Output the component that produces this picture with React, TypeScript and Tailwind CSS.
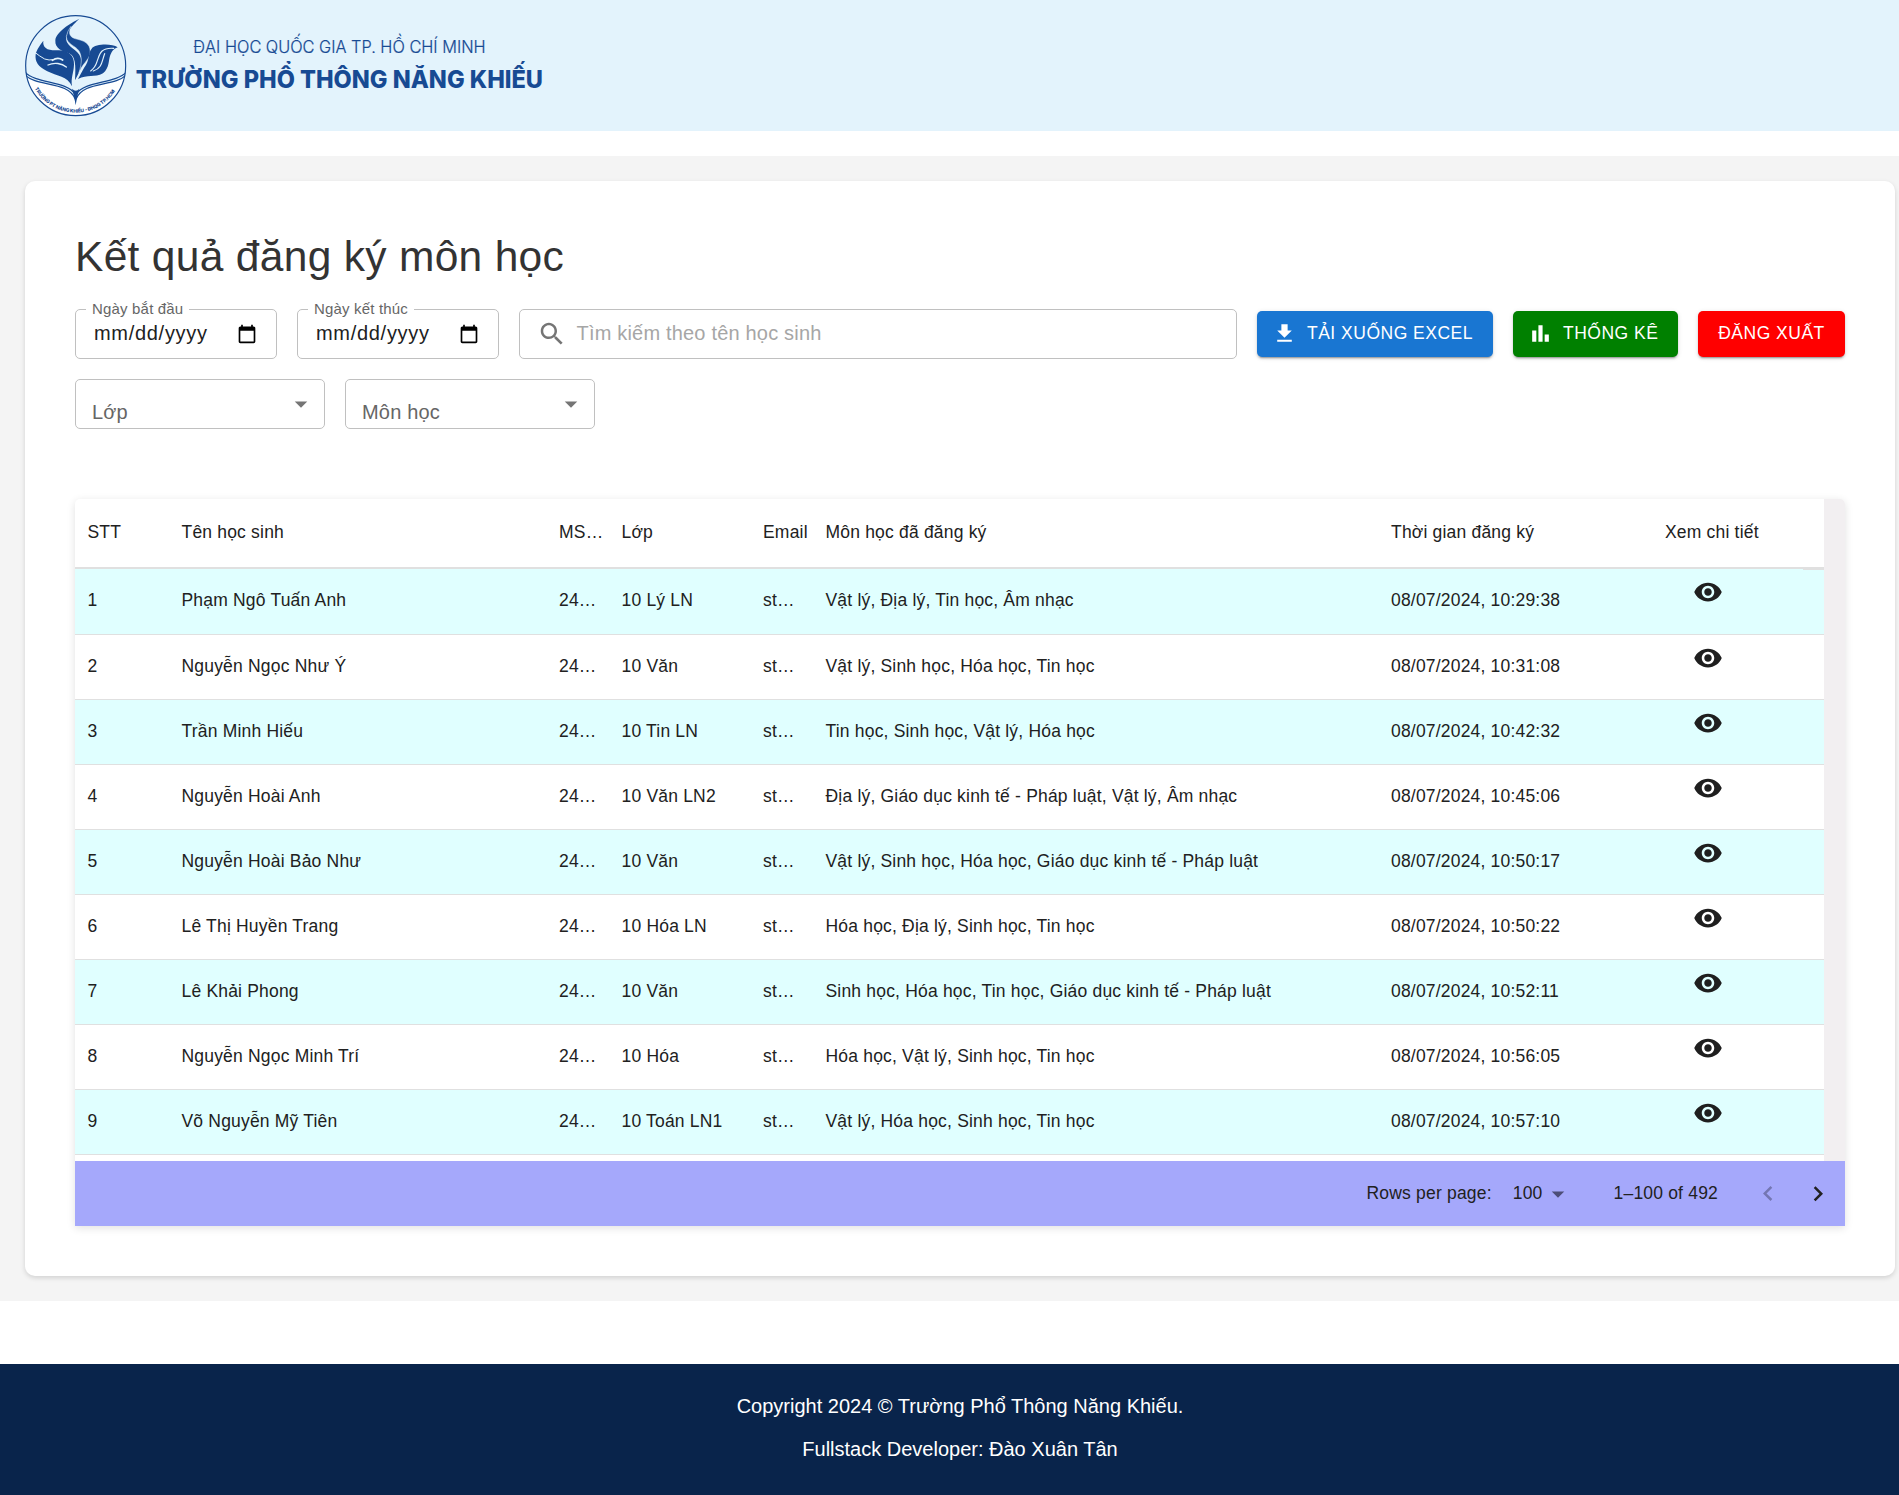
import React from "react";

type Student = { name: string; grade: string; subjects: string; time: string };

const students: Student[] = [
  { name: "Phạm Ngô Tuấn Anh", grade: "10 Lý LN", subjects: "Vật lý, Địa lý, Tin học, Âm nhạc", time: "10:29:38" },
  { name: "Nguyễn Ngọc Như Ý", grade: "10 Văn", subjects: "Vật lý, Sinh học, Hóa học, Tin học", time: "10:31:08" },
  { name: "Trần Minh Hiếu", grade: "10 Tin LN", subjects: "Tin học, Sinh học, Vật lý, Hóa học", time: "10:42:32" },
  { name: "Nguyễn Hoài Anh", grade: "10 Văn LN2", subjects: "Địa lý, Giáo dục kinh tế - Pháp luật, Vật lý, Âm nhạc", time: "10:45:06" },
  { name: "Nguyễn Hoài Bảo Như", grade: "10 Văn", subjects: "Vật lý, Sinh học, Hóa học, Giáo dục kinh tế - Pháp luật", time: "10:50:17" },
  { name: "Lê Thị Huyền Trang", grade: "10 Hóa LN", subjects: "Hóa học, Địa lý, Sinh học, Tin học", time: "10:50:22" },
  { name: "Lê Khải Phong", grade: "10 Văn", subjects: "Sinh học, Hóa học, Tin học, Giáo dục kinh tế - Pháp luật", time: "10:52:11" },
  { name: "Nguyễn Ngọc Minh Trí", grade: "10 Hóa", subjects: "Hóa học, Vật lý, Sinh học, Tin học", time: "10:56:05" },
  { name: "Võ Nguyễn Mỹ Tiên", grade: "10 Toán LN1", subjects: "Vật lý, Hóa học, Sinh học, Tin học", time: "10:57:10" },
];

const columns = "grid grid-cols-[94px_377.5px_62.5px_141.5px_62.5px_565.5px_274px_1fr]";

function Icon({ d, className }: { d: string; className?: string }) {
  return (
    <svg viewBox="0 0 24 24" fill="currentColor" className={className}>
      <path d={d} />
    </svg>
  );
}

const icons = {
  search:
    "M15.5 14h-.79l-.28-.27C15.41 12.59 16 11.11 16 9.5 16 5.91 13.09 3 9.5 3S3 5.91 3 9.5 5.91 16 9.5 16c1.61 0 3.09-.59 4.23-1.57l.27.28v.79l5 4.99L20.49 19l-4.99-5zm-6 0C7.01 14 5 11.99 5 9.5S7.01 5 9.5 5 14 7.01 14 9.5 11.99 14 9.5 14z",
  download: "M19 9h-4V3H9v6H5l7 7 7-7zM5 18v2h14v-2H5z",
  chart: "M4 9h4v11H4zm12 4h4v7h-4zm-6-9h4v16h-4z",
  arrow: "M7 10l5 5 5-5z",
  eye: "M12 4.5C7 4.5 2.73 7.61 1 12c1.73 4.39 6 7.5 11 7.5s9.27-3.11 11-7.5c-1.73-4.39-6-7.5-11-7.5zM12 17c-2.76 0-5-2.24-5-5s2.24-5 5-5 5 2.24 5 5-2.24 5-5 5zm0-8c-1.66 0-3 1.34-3 3s1.34 3 3 3 3-1.34 3-3-1.34-3-3-3z",
  calendar:
    "M20 3h-1V1h-2v2H7V1H5v2H4c-1.1 0-2 .9-2 2v16c0 1.1.9 2 2 2h16c1.1 0 2-.9 2-2V5c0-1.1-.9-2-2-2zm0 18H4V8h16v13z",
  left: "M15.41 16.09l-4.58-4.59 4.58-4.59L14 5.5l-6 6 6 6z",
  right: "M8.59 16.34l4.58-4.59-4.58-4.59L10 5.75l6 6-6 6z",
};

function Logo() {
  return (
    <svg viewBox="0 0 1680 393" className="block h-[131px] w-[560px]">
      <g transform="translate(60 30)" fill="#174a93">
        <clipPath id="disc">
          <circle cx="167" cy="167" r="151" />
        </clipPath>
        <g clipPath="url(#disc)">
          <path d="M10 193 C45 232 150 205 167 280 C184 205 290 232 325 193 L340 340 L0 340Z" fill="#fff" />
          <g fill="none" stroke="#174a93" strokeWidth="3.5">
            <path d="M14 186 C48 222 140 212 165 252" />
            <path d="M14 194 C50 232 145 212 166 268" />
            <path d="M320 186 C286 222 194 212 169 252" />
            <path d="M320 194 C284 232 189 212 168 268" />
          </g>
          <path d="M156 236 Q168 248 178 236 Q170 262 167 286 Q164 262 156 236Z" />
        </g>
        <circle cx="167" cy="167" r="150" fill="none" stroke="#174a93" strokeWidth="3.5" />
        <path d="M70 92 C67 113 82 122 111 121 C148 119 163 139 162 164 C161 190 152 202 156 229 C143 199 110 198 82 184 C55 171 44 156 47 133 Q49 119 70 92Z" />
        <path d="M178 26 C150 40 108 66 106 91 C104 116 128 125 147 130 C166 137 168 164 165 211 C176 190 186 174 184 151 C181 123 151 116 142 98 C129 75 158 45 178 26Z" />
        <path
          d="M153 49 C144 73 149 83 173 88 C202 94 213 109 210 131 C207 150 186 162 177 188 C186 158 186 139 177 123 C166 106 141 104 139 80 Q142 62 153 49Z"
          stroke="#e3f3fc"
          strokeWidth="1.5"
        />
        <path d="M293 112 C276 100 226 101 215 116 C203 130 211 149 192 174 Q182 192 174 207 C202 193 224 204 249 190 C269 174 265 149 271 135 Q276 119 293 112Z" />
        <g fill="none" stroke="#e3f3fc" strokeLinecap="round">
          <path d="M47 129 Q58 138 74 147 Q88 152 98 149" strokeWidth="3" />
          <path d="M97 151 C107 144 118 143 128 150" strokeWidth="5" />
          <path d="M84 165 C103 156 126 160 139 171" strokeWidth="4" />
          <path d="M281 115 C240 112 239 134 231 155 Q226 172 212 183" strokeWidth="3.5" />
          <path d="M254 131 C245 154 247 175 220 183" strokeWidth="3.5" />
        </g>
        <path id="ring" d="M43 233 A140 140 0 0 0 291 233" fill="none" />
        <text fontFamily="Inter, sans-serif" fontSize="14.5" fontWeight="800">
          <textPath href="#ring" startOffset="3" textLength="290">
            TRƯỜNG PT NĂNG KHIẾU - ĐHQG TP.HCM
          </textPath>
        </text>
      </g>
      <g fill="#174a93" fontFamily="Inter, sans-serif">
        <text x="580" y="158" fontSize="50" fontWeight="300" textLength="877" lengthAdjust="spacingAndGlyphs" stroke="#174a93" strokeWidth="0.6">
          ĐẠI HỌC QUỐC GIA TP. HỒ CHÍ MINH
        </text>
        <text x="407" y="264" fontSize="72" fontWeight="800" textLength="1222" lengthAdjust="spacingAndGlyphs">
          TRƯỜNG PHỔ THÔNG NĂNG KHIẾU
        </text>
      </g>
    </svg>
  );
}

function DateField({ label }: { label: string }) {
  return (
    <div className="relative flex h-[50px] w-[202px] items-center justify-between rounded-[5px] border border-[#c0c0c0] pr-[19px] pl-[18px]">
      <span className="absolute -top-[11px] left-[10px] bg-white px-[6px] text-[15px] leading-[20px] tracking-[0.18px] whitespace-nowrap text-[#666]">
        {label}
      </span>
      <span className="-mt-[2px] text-[20px] leading-[28px] tracking-[0.7px] text-[#212121]">mm/dd/yyyy</span>
      <Icon d={icons.calendar} className="-mt-[1px] h-[20px] w-[20px] text-black" />
    </div>
  );
}

function SelectField({ label }: { label: string }) {
  return (
    <div className="flex h-[50px] w-[250px] justify-between rounded-[5px] border border-[#c0c0c0] pr-[8px] pl-[16px] text-[#666]">
      <span className="pt-[18px] text-[20px] leading-[28px] tracking-[0.19px]">{label}</span>
      <Icon d={icons.arrow} className="mt-[9px] h-[30px] w-[30px] text-[#757575]" />
    </div>
  );
}

const buttonBase =
  "flex h-[46px] items-center rounded-[5px] pb-[2px] text-[17.5px] tracking-[0.5px] whitespace-nowrap text-white shadow-[0_3px_1px_-2px_rgba(0,0,0,0.2),0_2px_2px_0_rgba(0,0,0,0.14),0_1px_5px_0_rgba(0,0,0,0.12)]";

export default function App() {
  return (
    <div className="h-[1495px] w-full overflow-hidden bg-white font-['Liberation_Sans',Arial,sans-serif] text-[#212121]">
      <header className="h-[131px] bg-[#e3f3fc]">
        <Logo />
      </header>

      <main className="mt-[25px] h-[1145px] bg-[#f4f4f4] py-[25px] pr-[4px] pl-[25px]">
        <section className="h-[1095px] rounded-[10px] bg-white p-[50px] shadow-[0_2px_5px_rgba(0,0,0,0.14)]">
          <h1 className="h-[52px] text-[42.5px] leading-[52px] tracking-[0.31px] whitespace-nowrap text-[#333]">
            Kết quả đăng ký môn học
          </h1>

          <div className="mt-[26px] flex items-center gap-5">
            <DateField label="Ngày bắt đầu" />
            <DateField label="Ngày kết thúc" />
            <div className="flex h-[50px] flex-1 items-center rounded-[5px] border border-[#c0c0c0] pl-[17px]">
              <Icon d={icons.search} className="h-[30px] w-[30px] text-[#757575]" />
              <span className="-mt-[2px] ml-[9.5px] text-[20px] tracking-[0.19px] text-[#a6a6a6]">Tìm kiếm theo tên học sinh</span>
            </div>
            <button className={`${buttonBase} w-[236px] bg-[#1976d2] pl-[15px]`}>
              <Icon d={icons.download} className="mt-[1px] mr-[10px] h-[25px] w-[25px]" />
              TẢI XUỐNG EXCEL
            </button>
            <button className={`${buttonBase} w-[165px] bg-[#008000] pl-[15px]`}>
              <Icon d={icons.chart} className="mt-[1px] mr-[10px] h-[25px] w-[25px]" />
              THỐNG KÊ
            </button>
            <button className={`${buttonBase} w-[147px] justify-center bg-[#ff0000]`}>ĐĂNG XUẤT</button>
          </div>

          <div className="mt-5 flex gap-5">
            <SelectField label="Lớp" />
            <SelectField label="Môn học" />
          </div>

          <div className="mt-[70px] h-[727px] rounded-t-[5px] text-[17.5px] tracking-[0.19px] shadow-[0_2px_8px_rgba(0,0,0,0.12)]">
            <div className="flex h-[662px] overflow-hidden rounded-t-[5px]">
              <div className="relative w-[1749px]">
                <div className={`${columns} h-[70px] items-center border-b-2 border-[#e0e0e0] pb-[1px]`}>
                  <div className="pl-[12.5px]">STT</div>
                  <div className="pl-[12.5px]">Tên học sinh</div>
                  <div className="pl-[12.5px]">MS…</div>
                  <div className="pl-[12.5px]">Lớp</div>
                  <div className="pl-[12.5px]">Email</div>
                  <div className="pl-[12.5px]">Môn học đã đăng ký</div>
                  <div className="pl-[12.5px]">Thời gian đăng ký</div>
                  <div className="pl-[12.5px]">Xem chi tiết</div>
                </div>
                <div className="absolute top-[70px] right-0 h-[1px] w-[21px] bg-[#e0e0e0]" />
                {students.map((s, i) => (
                  <div
                    key={s.name}
                    className={`${columns} items-center border-b border-[#e0e0e0] pb-[2px] ${i === 0 ? "h-[66px]" : "h-[65px]"} ${
                      i % 2 === 0 ? "bg-[#e0ffff]" : "bg-white"
                    }`}
                  >
                    <div className="pl-[12.5px]">{i + 1}</div>
                    <div className="pl-[12.5px]">{s.name}</div>
                    <div className="pl-[12.5px]">24…</div>
                    <div className="pl-[12.5px]">{s.grade}</div>
                    <div className="pl-[12.5px]">st…</div>
                    <div className="pl-[12.5px]">{s.subjects}</div>
                    <div className="pl-[12.5px]">08/07/2024, {s.time}</div>
                    <div className="pb-[17px] pl-[40px]">
                      <Icon d={icons.eye} className="h-[30px] w-[30px] text-[#1f1f1f]" />
                    </div>
                  </div>
                ))}
              </div>
              <div className="w-[21px] bg-[#f2eff1]" />
            </div>
            <div className="flex h-[65px] items-center justify-end bg-[#a5a8fb]">
              <span className="pb-[1px]">Rows per page:</span>
              <span className="ml-[21px] pb-[1px]">100</span>
              <Icon d={icons.arrow} className="h-[30px] w-[30px] text-[#4d4e78]" />
              <span className="ml-[41px] pb-[1px]">1–100 of 492</span>
              <Icon d={icons.left} className="ml-[35px] h-[30px] w-[30px] text-[#7476b2]" />
              <Icon d={icons.right} className="mr-[12px] ml-[20px] h-[30px] w-[30px]" />
            </div>
          </div>
        </section>
      </main>

      <footer className="mt-[63px] -mr-[21px] h-[131px] bg-[#09244b] pt-[21px] text-center text-[20px] leading-[43px] text-white">
        <p>Copyright 2024 © Trường Phổ Thông Năng Khiếu.</p>
        <p>Fullstack Developer: Đào Xuân Tân</p>
      </footer>
    </div>
  );
}
